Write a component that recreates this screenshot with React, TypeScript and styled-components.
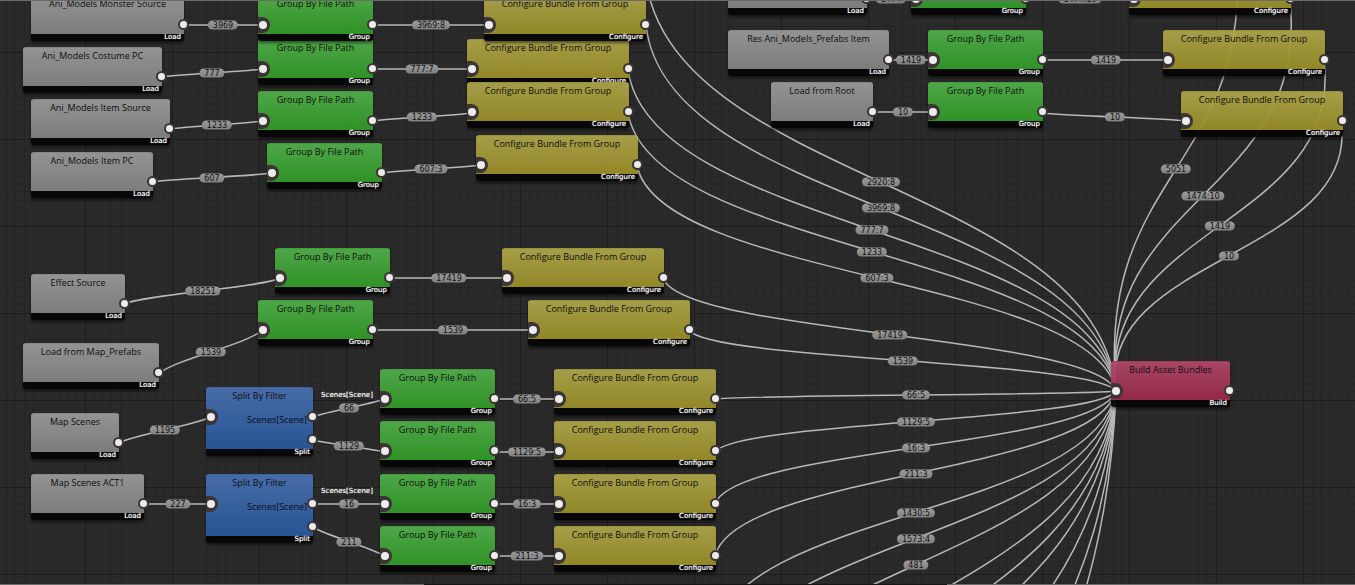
import React from 'react';
import styled, { createGlobalStyle } from 'styled-components';

const GlobalStyle = createGlobalStyle`
  * { box-sizing: border-box; }
  html, body { margin: 0; padding: 0; background: #292929; }
`;

const titleFont = `'Open Sans', 'DejaVu Sans', sans-serif`;
const labelFont = `'DejaVu Sans', sans-serif`;

type Kind = 'load' | 'group' | 'configure' | 'split' | 'build';

const fills: Record<Kind, [string, string]> = {
  load: ['#9a9a9a', '#828282'],
  group: ['#51ae4a', '#309927'],
  configure: ['#aea54b', '#988d27'],
  split: ['#4970b0', '#27589b'],
  build: ['#b04869', '#9a294a'],
};

const footers: Record<Kind, string> = {
  load: 'Load',
  group: 'Group',
  configure: 'Configure',
  split: 'Split',
  build: 'Build',
};

const defaultTitles: Record<Kind, string> = {
  load: '',
  group: 'Group By File Path',
  configure: 'Configure Bundle From Group',
  split: 'Split By Filter',
  build: 'Build Asset Bundles',
};

const Canvas = styled.main`
  position: relative;
  width: 100%;
  height: 100vh;
  overflow: hidden;
  background: #2a2a2a;
  font-family: ${labelFont};
`;

const Wires = styled.svg`
  display: block;
  width: 100%;
  height: 100%;
`;

const NodeBox = styled.article<{ $x: number; $y: number; $w: number; $tall: boolean }>`
  position: absolute;
  left: ${(p) => p.$x}px;
  top: ${(p) => p.$y}px;
  width: ${(p) => p.$w}px;
  height: ${(p) => (p.$tall ? 69 : 46)}px;
  display: flex;
  flex-direction: column;
  border-radius: 3px;
  box-shadow: 0 2px 3px rgba(0, 0, 0, 0.5);
`;

const NodeBody = styled.div<{ $kind: Kind }>`
  flex: 1;
  display: flex;
  flex-direction: column;
  padding: 2px 6px 0;
  border-radius: 3px 3px 0 0;
  border-top: 1px solid rgba(255, 255, 255, 0.1);
  background: linear-gradient(${(p) => fills[p.$kind][0]}, ${(p) => fills[p.$kind][1]});
  opacity: 0.94;
`;

const NodeTitle = styled.h2`
  margin: 0;
  font-family: ${titleFont};
  font-size: 9px;
  line-height: 12px;
  font-weight: 400;
  text-align: center;
  white-space: nowrap;
  color: #0c0c0c;
`;

const FilterName = styled.span`
  margin-top: 12px;
  font-family: ${titleFont};
  font-size: 9px;
  line-height: 12px;
  text-align: right;
  color: #0a0a10;
`;

const NodeFooter = styled.footer`
  position: relative;
  height: 7px;
  padding-right: 3px;
  border-radius: 0 0 3px 3px;
  background: rgba(6, 6, 6, 0.96);
  font-size: 7px;
  line-height: 6px;
  text-align: right;
  color: #ffffff;
  text-shadow: 0 0 1px #cccccc;
`;

const InPort = styled.i`
  position: absolute;
  left: 0;
  top: 22px;
  width: 12px;
  height: 16px;
  border-radius: 1px 8px 8px 1px;
  background: #3c3435;

  &::after {
    content: '';
    position: absolute;
    left: 1px;
    top: 4px;
    width: 8px;
    height: 8px;
    border-radius: 50%;
    background: #ececec;
  }
`;

const OutPort = styled.i<{ $top: number }>`
  position: absolute;
  right: -5px;
  top: ${(p) => p.$top}px;
  width: 11px;
  height: 11px;
  border: 2px solid #3c3435;
  border-radius: 50%;
  background: #ececec;
`;

const Tag = styled.span<{ $x: number; $y: number }>`
  position: absolute;
  left: ${(p) => p.$x}px;
  top: ${(p) => p.$y}px;
  transform: translate(-50%, -50%);
  height: 9px;
  padding: 0 5px;
  border-radius: 5px;
  background: linear-gradient(#9c9c9c, #808080);
  font-size: 8px;
  line-height: 9px;
  white-space: nowrap;
  color: #101010;
`;

const WireName = styled.span<{ $x: number; $y: number }>`
  position: absolute;
  left: ${(p) => p.$x}px;
  top: ${(p) => p.$y}px;
  transform: translate(-50%, -50%);
  font-size: 7px;
  line-height: 9px;
  color: #ffffff;
  text-shadow: 0 0 1px #bbbbbb;
`;

const TopEdge = styled.div`
  position: absolute;
  inset: 0 0 auto 0;
  height: 1px;
  background: #6b6b6b;
`;

const ScrollEdge = styled.div`
  position: absolute;
  inset: auto 0 0 0;
  height: 1px;
  display: grid;
  grid-template-columns: 424fr 523fr 408fr;

  & > :nth-child(odd) { background: #6b6b6b; }
  & > :nth-child(even) { background: #161616; }
`;

interface GraphNode {
  kind: Kind;
  x: number;
  y: number;
  w: number;
  title?: string;
}

const G = 115;
const C = 162;

const nodes: GraphNode[] = [
  { kind: 'load', x: 23, y: 47, w: 139, title: 'Ani_Models Costume PC' },
  { kind: 'group', x: 258, y: 39, w: G },
  { kind: 'configure', x: 467, y: 39, w: C },
  { kind: 'load', x: 31, y: -5, w: 153, title: 'Ani_Models Monster Source' },
  { kind: 'group', x: 258, y: -5, w: G },
  { kind: 'configure', x: 484, y: -5, w: C },
  { kind: 'load', x: 31, y: 99, w: 139, title: 'Ani_Models Item Source' },
  { kind: 'group', x: 258, y: 91, w: G },
  { kind: 'configure', x: 467, y: 82, w: C },
  { kind: 'load', x: 31, y: 152, w: 122, title: 'Ani_Models Item PC' },
  { kind: 'group', x: 267, y: 143, w: G },
  { kind: 'configure', x: 476, y: 135, w: C },
  { kind: 'load', x: 728, y: -31, w: 139, title: '' },
  { kind: 'group', x: 911, y: -31, w: G, title: '' },
  { kind: 'configure', x: 1129, y: -31, w: C, title: '' },
  { kind: 'load', x: 728, y: 30, w: 161, title: 'Res Ani_Models_Prefabs Item' },
  { kind: 'group', x: 928, y: 30, w: G },
  { kind: 'configure', x: 1163, y: 30, w: C },
  { kind: 'load', x: 771, y: 82, w: 102, title: 'Load from Root' },
  { kind: 'group', x: 928, y: 82, w: G },
  { kind: 'configure', x: 1181, y: 91, w: C },
  { kind: 'load', x: 31, y: 274, w: 94, title: 'Effect Source' },
  { kind: 'group', x: 275, y: 248, w: G },
  { kind: 'configure', x: 502, y: 248, w: C },
  { kind: 'load', x: 23, y: 343, w: 136, title: 'Load from Map_Prefabs' },
  { kind: 'group', x: 258, y: 300, w: G },
  { kind: 'configure', x: 528, y: 300, w: C },
  { kind: 'load', x: 31, y: 413, w: 88, title: 'Map Scenes' },
  { kind: 'split', x: 206, y: 387, w: 107 },
  { kind: 'load', x: 31, y: 474, w: 113, title: 'Map Scenes ACT1' },
  { kind: 'split', x: 206, y: 474, w: 107 },
  { kind: 'group', x: 380, y: 369, w: G },
  { kind: 'configure', x: 554, y: 369, w: C },
  { kind: 'group', x: 380, y: 421, w: G },
  { kind: 'configure', x: 554, y: 421, w: C },
  { kind: 'group', x: 380, y: 474, w: G },
  { kind: 'configure', x: 554, y: 474, w: C },
  { kind: 'group', x: 380, y: 526, w: G },
  { kind: 'configure', x: 554, y: 526, w: C },
  { kind: 'build', x: 1111, y: 361, w: 119 },
];

type Wire = [x1: number, y1: number, x2: number, y2: number, count?: string];

const HUB_X = 1116;
const HUB_Y = 391;

const wires: Wire[] = [
  [183, 25, 263, 25, '3969'],
  [372, 25, 489, 25, '3969:8'],
  [161, 77, 263, 69, '777'],
  [372, 69, 472, 69, '777:7'],
  [170, 129, 263, 121, '1233'],
  [372, 121, 472, 113, '1233'],
  [152, 182, 272, 173, '607'],
  [381, 173, 481, 165, '607:3'],
  [866, -1, 916, -1, '1474'],
  [1025, -1, 1134, -1, '1474:10'],
  [889, 60, 933, 60, '1419'],
  [1043, 60, 1168, 60, '1419'],
  [873, 112, 933, 112, '10'],
  [1043, 113, 1186, 121, '10'],
  [124, 304, 281, 278, '18251'],
  [390, 278, 507, 278, '17419'],
  [158, 374, 263, 330, '1539'],
  [372, 330, 533, 330, '1539'],
  [118, 443, 211, 417, '1195'],
  [144, 504, 211, 504, '227'],
  [312, 417, 385, 399, '66'],
  [312, 440, 385, 452, '1129'],
  [312, 504, 385, 504, '16'],
  [312, 527, 385, 556, '211'],
  [494, 399, 559, 399, '66:5'],
  [494, 452, 559, 452, '1129:5'],
  [494, 504, 559, 504, '16:3'],
  [494, 556, 559, 556, '211:3'],
  [645, -27, HUB_X, HUB_Y, '2920:8'],
  [646, 25, HUB_X, HUB_Y, '3969:8'],
  [628, 69, HUB_X, HUB_Y, '777:7'],
  [628, 112, HUB_X, HUB_Y, '1233'],
  [637, 165, HUB_X, HUB_Y, '607:3'],
  [663, 278, HUB_X, HUB_Y, '17419'],
  [689, 330, HUB_X, HUB_Y, '1539'],
  [715, 399, HUB_X, HUB_Y, '66:5'],
  [715, 452, HUB_X, HUB_Y, '1129:5'],
  [715, 504, HUB_X, HUB_Y, '16:3'],
  [715, 556, HUB_X, HUB_Y, '211:3'],
  [715, 634, HUB_X, HUB_Y, '1430:5'],
  [715, 686, HUB_X, HUB_Y, '1573:4'],
  [715, 739, HUB_X, HUB_Y, '481'],
  [715, 820, HUB_X, HUB_Y],
  [715, 884, HUB_X, HUB_Y],
  [715, 952, HUB_X, HUB_Y],
  [715, 1070, HUB_X, HUB_Y],
  [715, 1233, HUB_X, HUB_Y],
  [715, 1395, HUB_X, HUB_Y],
  [1236, -53, HUB_X, HUB_Y, '5051'],
  [1290, 0, HUB_X, HUB_Y, '1474:10'],
  [1324, 60, HUB_X, HUB_Y, '1419'],
  [1341, 121, HUB_X, HUB_Y, '10'],
];

const MAX_REACH = 20;

// Short wires run nearly straight; long ones leave and enter their ports steeply.
function wirePath([x1, y1, x2, y2]: Wire) {
  const mid = (y1 + y2) / 2;
  const short = x2 > x1 && x2 - x1 < 170;
  const lift = short ? (y2 - y1) * 0.36 : mid - y1;
  const reach = MAX_REACH;
  return `M${x1} ${y1}C${x1 + reach} ${y1 + lift} ${x2 - reach} ${y2 - lift} ${x2} ${y2}`;
}

const minorLines = [9, 17, 26, 35, 44, 52, 61, 70, 78];

function Node({ node }: { node: GraphNode }) {
  const tall = node.kind === 'split';
  const title = node.title ?? defaultTitles[node.kind];
  return (
    <NodeBox $x={node.x} $y={node.y} $w={node.w} $tall={tall}>
      <NodeBody $kind={node.kind}>
        {title && <NodeTitle>{title}</NodeTitle>}
        {tall && <FilterName>Scenes[Scene]</FilterName>}
      </NodeBody>
      <NodeFooter>{footers[node.kind]}</NodeFooter>
      {node.kind !== 'load' && <InPort />}
      <OutPort $top={24} />
      {tall && <OutPort $top={47} />}
    </NodeBox>
  );
}

export default function App() {
  return (
    <>
      <GlobalStyle />
      <Canvas>
        <Wires aria-hidden="true">
          <defs>
            <pattern id="grid" x="85" y="52" width="87" height="87" patternUnits="userSpaceOnUse">
              {minorLines.map((m) => (
                <path key={m} d={`M0 ${m}.5H87M${m}.5 0V87`} stroke="#252525" fill="none" />
              ))}
              <path d="M0 .5H87M.5 0V87" stroke="#1d1d1d" fill="none" />
            </pattern>
          </defs>
          <rect width="100%" height="100%" fill="url(#grid)" />
          <g fill="none" stroke="#b8b8b8" strokeWidth="1.5">
            {wires.map((w, i) => (
              <path key={i} d={wirePath(w)} />
            ))}
          </g>
        </Wires>
        {wires.map((w, i) =>
          w[4] ? (
            <Tag key={i} $x={Math.round((w[0] + w[2]) / 2)} $y={Math.round((w[1] + w[3]) / 2)}>
              {w[4]}
            </Tag>
          ) : null,
        )}
        {nodes.map((n, i) => (
          <Node key={i} node={n} />
        ))}
        <WireName $x={347} $y={395}>Scenes[Scene]</WireName>
        <WireName $x={347} $y={491}>Scenes[Scene]</WireName>
        <TopEdge />
        <ScrollEdge>
          <span />
          <span />
          <span />
        </ScrollEdge>
      </Canvas>
    </>
  );
}
